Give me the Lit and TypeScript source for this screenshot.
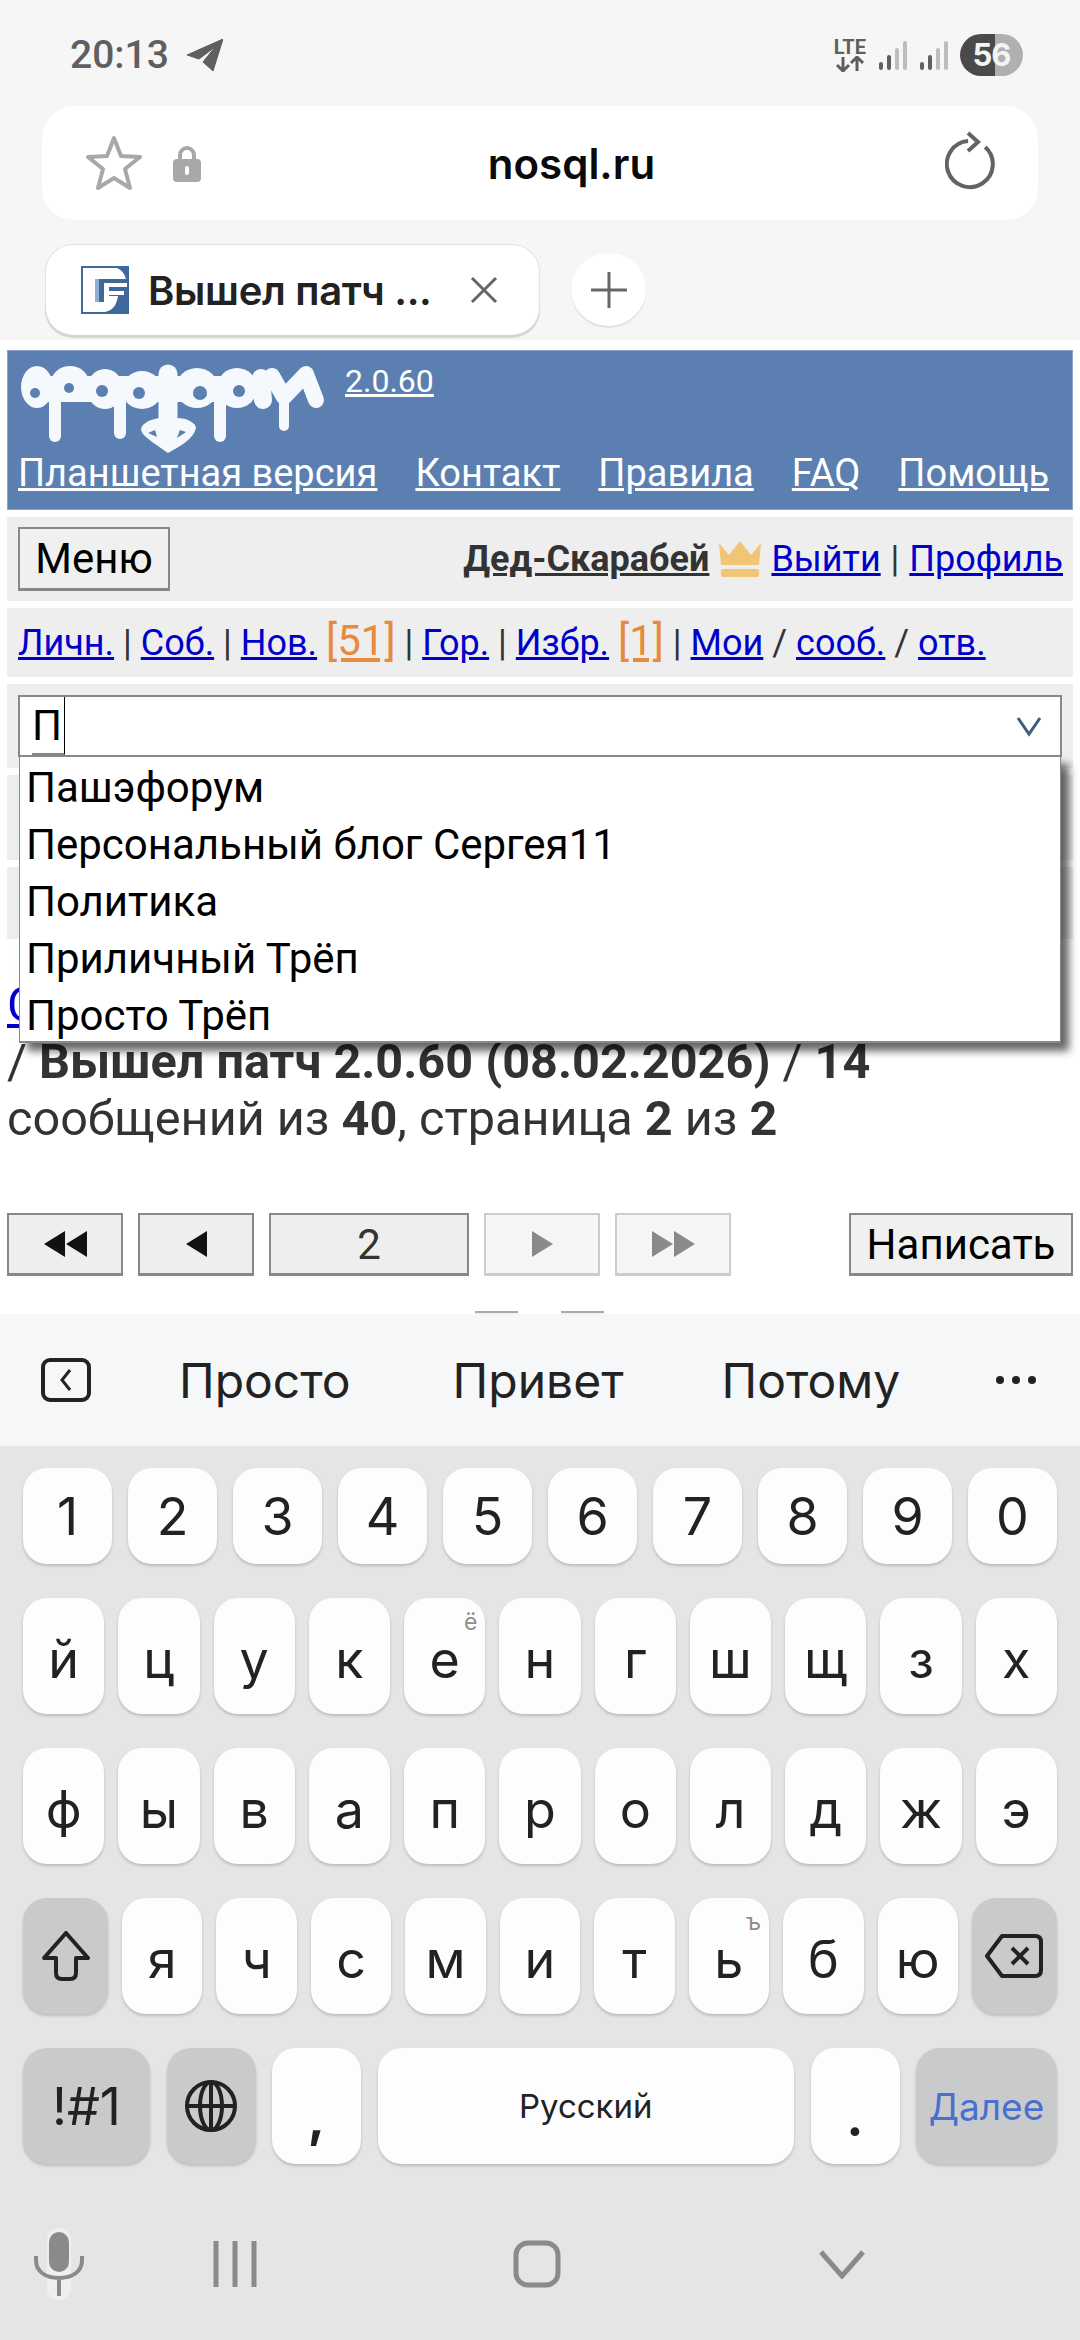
import { LitElement, html, css, svg } from 'lit';
import { customElement } from 'lit/decorators.js';

const ROW_NUM = ['1', '2', '3', '4', '5', '6', '7', '8', '9', '0'];
const ROW_TOP = ['й', 'ц', 'у', 'к', 'е', 'н', 'г', 'ш', 'щ', 'з', 'х'];
const ROW_MID = ['ф', 'ы', 'в', 'а', 'п', 'р', 'о', 'л', 'д', 'ж', 'э'];
const ROW_LOW = ['я', 'ч', 'с', 'м', 'и', 'т', 'ь', 'б', 'ю'];
const HINTS: Record<string, string> = { е: 'ё', ь: 'ъ' };
const OPTIONS = ['Пашэфорум', 'Персональный блог Сергея11', 'Политика', 'Приличный Трёп', 'Просто Трёп'];

const bars = () => svg`
  <rect x="0" y="21" width="4" height="8" rx="2" fill="#5f5f5f"></rect>
  <rect x="8" y="14" width="4" height="15" rx="2" fill="#5f5f5f"></rect>
  <rect x="16" y="7" width="4" height="22" rx="2" fill="#bdbdbd"></rect>
  <rect x="24" y="0" width="4" height="29" rx="2" fill="#bdbdbd"></rect>
`;

const blob = (cx: number, cy: number, rx: number, ry: number) => svg`
  <ellipse cx=${cx} cy=${cy} rx=${rx} ry=${ry} fill="#f5f9fd"></ellipse>
`;
const hole = (cx: number, cy: number, r: number) => svg`
  <circle cx=${cx} cy=${cy} r=${r} fill="#5b7fb0"></circle>
`;

@customElement('app-root')
export class AppRoot extends LitElement {
  static styles = css`
    :host {
      display: block;
      width: 1080px;
      height: 2340px;
      overflow: hidden;
      font-family: Roboto, sans-serif;
      background: #fff;
    }
    * {
      box-sizing: border-box;
    }
    svg {
      display: block;
      flex: none;
    }

    .chrome {
      height: 340px;
      background: #f6f6f6;
      padding: 0 42px;
    }
    .status {
      height: 106px;
      display: flex;
      align-items: center;
      padding: 4px 15px 0 28px;
      color: #5f5f5f;
    }
    .time {
      font: 500 39px Roboto, sans-serif;
      margin-right: 18px;
    }
    .status-right {
      margin-left: auto;
      display: flex;
      align-items: center;
      gap: 13px;
    }
    .lte {
      font: 700 20px/18px Roboto, sans-serif;
      text-align: center;
    }
    .battery {
      width: 63px;
      height: 42px;
      border-radius: 21px;
      margin-left: -1px;
      background: linear-gradient(90deg, #4a4a4a 0 35px, #b0b0b0 35px);
      color: #f4f4f4;
      font: 700 31px/42px Inter, sans-serif;
      text-align: center;
      letter-spacing: -1px;
    }
    .url {
      height: 114px;
      border-radius: 32px;
      background: #fff;
      display: flex;
      align-items: center;
      padding: 0 41px 0 43px;
    }
    .url .host {
      flex: 1;
      text-align: center;
      font: 600 42px Inter, sans-serif;
      color: #0a0a0a;
      padding-right: 3px;
    }
    .lock {
      margin-left: 30px;
    }
    .reload {
      margin-top: -4px;
    }
    .tabs {
      display: flex;
      align-items: flex-start;
      margin-top: 24px;
      padding-left: 3px;
    }
    .tab {
      width: 495px;
      height: 91px;
      border-radius: 28px;
      background: #fff;
      border: 1px solid #e2e2e2;
      border-bottom: none;
      box-shadow: 0 3px 1px #d4d4d4;
      display: flex;
      align-items: center;
      padding: 0 41px 0 35px;
      margin-right: 31px;
    }
    .tab-title {
      font: 600 40px Inter, sans-serif;
      color: #222;
      margin-left: 19px;
      flex: 1;
      white-space: nowrap;
      letter-spacing: -0.3px;
    }
    .plus {
      width: 75px;
      height: 73px;
      margin-top: 9px;
      border-radius: 50%;
      background: #fff;
      box-shadow: 0 2px 1px #e0e0e0;
      display: flex;
      align-items: center;
      justify-content: center;
    }

    .page {
      height: 974px;
      overflow: hidden;
      padding: 10px 7px 0;
      background: #fff;
      font-size: 38px;
      color: #333;
    }
    a {
      color: #0000cc;
      text-decoration: underline;
    }
    .head {
      height: 160px;
      background: #5b7fb0;
      border: 1px solid #8aa3c6;
      padding: 0 10px;
    }
    .head a {
      color: #fff;
    }
    .head-top {
      height: 98px;
      display: flex;
      align-items: flex-start;
    }
    .logo {
      margin-left: -10px;
    }
    .ver {
      font-size: 32px;
      margin: 11px 0 0 7px;
    }
    .head-links {
      display: flex;
      gap: 38px;
      font-size: 38px;
      line-height: 48px;
      white-space: nowrap;
    }
    .gray {
      background: #eee;
      margin-top: 7px;
      padding: 0 11px;
      display: flex;
      align-items: center;
    }
    .user {
      height: 84px;
      justify-content: space-between;
    }
    .menu-btn {
      width: 152px;
      height: 64px;
      border: 2px solid #888;
      border-bottom-width: 3px;
      background: #f0f0f0;
      color: #000;
      font-size: 42px;
      line-height: 60px;
      text-align: center;
    }
    .who {
      display: flex;
      align-items: center;
      gap: 9px;
      font-size: 36px;
      white-space: pre;
      margin-right: -1px;
    }
    .who b {
      color: #333;
      text-decoration: underline;
    }
    .sep {
      color: #333;
    }
    .who .sep {
      margin: 0 1px;
    }
    .nav-links {
      height: 69px;
      font-size: 36px;
      white-space: pre;
    }
    .orange {
      color: #e88a3c;
      font-size: 42px;
      line-height: 36px;
    }
    .select-row {
      height: 84px;
      padding-top: 4px;
      align-items: flex-start;
    }
    .select {
      position: relative;
      width: 100%;
      margin-top: 7px;
    }
    .field {
      height: 62px;
      border: 2px solid #888;
      background: #fff;
      display: flex;
      align-items: center;
      justify-content: space-between;
      padding: 0 18px 0 0;
    }
    .typed {
      height: 58px;
      margin-left: 12px;
      padding-right: 2px;
      border-right: 1px solid #000;
      border-bottom: 2px solid #888;
      font-size: 42px;
      line-height: 58px;
      color: #000;
    }
    .options {
      position: absolute;
      z-index: 2;
      top: 61px;
      left: 1px;
      right: 1px;
      height: 287px;
      background: #fff;
      border: 1px solid #888;
      border-bottom-width: 2px;
      box-shadow: 8px 8px 8px rgba(0, 0, 0, 0.6);
      padding: 2px 6px 0;
    }
    .option {
      height: 57px;
      line-height: 57px;
      font-size: 42px;
      color: #000;
      white-space: nowrap;
    }
    .block-a {
      height: 85px;
    }
    .block-b {
      height: 72px;
    }
    .thread {
      margin-top: 37px;
      font-size: 48.6px;
      line-height: 57px;
      color: #333;
    }
    .pager {
      display: flex;
      margin-top: 66px;
      gap: 15px;
    }
    .pbtn {
      width: 116px;
      height: 63px;
      border: 2px solid #888;
      border-bottom-width: 3px;
      background: #eee;
      display: flex;
      align-items: center;
      justify-content: center;
      font-size: 42px;
      color: #333;
    }
    .pbtn.off {
      border-color: #ccc;
      background: #f6f6f6;
    }
    .pbtn.num {
      width: 200px;
    }
    .pbtn.write {
      width: 224px;
      margin-left: auto;
      color: #000;
      background: #f0f0f0;
    }
    .stubs {
      display: flex;
      gap: 43px;
      margin: 35px 0 0 468px;
    }
    .stubs i {
      width: 43px;
      height: 6px;
      border-top: 2px solid #aaa;
      background: #f0f0f0;
    }

    .strip {
      height: 132px;
      background: #f6f7f8;
      display: flex;
      align-items: center;
      padding: 0 0 0 41px;
      color: #222;
      font: 400 48px Inter, sans-serif;
    }
    .word {
      white-space: nowrap;
    }
    .w1 {
      margin-left: 88px;
    }
    .w2 {
      margin-left: 102px;
    }
    .w3 {
      margin-left: 98px;
    }
    .more {
      margin-left: 95px;
    }
    .keyboard {
      height: 894px;
      background: #e4e5e7;
      padding: 22px 23px 0;
      display: flex;
      flex-direction: column;
      gap: 34px;
    }
    .krow {
      display: flex;
      gap: 14px;
      height: 116px;
    }
    .krow.nums {
      gap: 16px;
      height: 96px;
    }
    .krow.last {
      gap: 16.5px;
    }
    .key {
      position: relative;
      flex: 1 1 0;
      min-width: 0;
      border-radius: 24px;
      background: #fdfdfe;
      box-shadow: 0 2px 3px rgba(0, 0, 0, 0.18);
      display: flex;
      align-items: center;
      justify-content: center;
      color: #222;
      font: 400 52px Inter, sans-serif;
      padding-top: 6px;
    }
    .nums .key {
      padding-top: 0;
    }
    .key.fn {
      background: #c9cacc;
      padding-top: 0;
    }
    .key sup {
      position: absolute;
      top: 12px;
      right: 8px;
      font: 400 23px Inter, sans-serif;
      line-height: 24px;
      color: #8e8e8e;
    }
    .w85 {
      flex: 0 0 85px;
    }
    .sym {
      flex: 0 0 127px;
    }
    .globe {
      flex: 0 0 89px;
    }
    .punct {
      flex: 0 0 89px;
      font-weight: 700;
      padding: 22px 0 0;
    }
    .space {
      flex: 1 1 auto;
      font-size: 33px;
      padding-top: 0;
    }
    .go {
      flex: 0 0 141px;
      color: #4a6fcf;
      font-size: 37px;
    }
    .bottom {
      display: flex;
      align-items: center;
      margin-top: 30px;
      padding-left: 8px;
    }
    .nav-recents {
      margin-left: 126px;
    }
    .nav-home {
      margin-left: 256px;
    }
    .nav-back {
      margin-left: 257px;
    }
  `;

  private logo() {
    return html`<svg class="logo" width="330" height="105" viewBox="8 351 330 105">
      <g stroke="#f5f9fd" stroke-linecap="round" stroke-linejoin="round" fill="none">
        <path d="M55 400V436" stroke-width="12"></path>
        <path d="M120 400V433" stroke-width="12"></path>
        <path d="M220 400V436" stroke-width="12"></path>
        <path d="M284 395V426" stroke-width="10"></path>
        <path d="M168 374V420" stroke-width="19"></path>
        <path d="M261 378L263 400" stroke-width="18"></path>
        <path d="M272 376L284 397L306 374L316 400" stroke-width="16"></path>
      </g>
      <rect x="40" y="376" width="212" height="26" fill="#f5f9fd"></rect>
      ${blob(37, 387, 16, 21)} ${blob(70, 383, 19, 17)} ${blob(105, 389, 18, 20)}
      ${blob(142, 390, 20, 19)} ${blob(197, 388, 21, 20)} ${blob(237, 388, 20, 20)}
      <path
        d="M159 418C147 420 141 425 141 430C142 436 154 443 168 453C181 446 194 438 196 428C196 423 187 418 177 418Z"
        fill="#f5f9fd"
      ></path>
      ${hole(35, 393, 5)} ${hole(69, 388, 5)} ${hole(102, 391, 6)} ${hole(139, 393, 6)}
      ${hole(200, 393, 7)} ${hole(239, 391, 6)}
      <path d="M148 433L157 437L155 430ZM186 432L177 438L180 430Z" fill="#5b7fb0"></path>
    </svg>`;
  }

  private chrome() {
    return html`<div class="chrome">
      <div class="status">
        <span class="time">20:13</span>
        <svg width="36" height="32" viewBox="0 0 36 32">
          <path d="M36 0L0 16L12 20L28 8L16 23L26 32Z" fill="#5f5f5f" stroke="#5f5f5f" stroke-linejoin="round"></path>
        </svg>
        <div class="status-right">
          <div class="lte">
            LTE
            <svg width="32" height="16" viewBox="0 0 32 16">
              <path d="M9 1V14M3 9L9 15L15 9M23 15V2M17 7L23 1L29 7" stroke="#5f5f5f" stroke-width="3" fill="none"></path>
            </svg>
          </div>
          <svg width="28" height="29" viewBox="0 0 28 29">${bars()}</svg>
          <svg width="28" height="29" viewBox="0 0 28 29">${bars()}</svg>
          <div class="battery">56</div>
        </div>
      </div>
      <div class="url">
        <svg width="58" height="56" viewBox="0 0 58 56">
          <path
            d="M29 3L36 21L55 22L40 34L45 53L29 43L13 53L18 34L3 22L22 21Z"
            fill="none"
            stroke="#a8a8a8"
            stroke-width="4"
            stroke-linejoin="round"
          ></path>
        </svg>
        <svg class="lock" width="28" height="37" viewBox="0 0 28 37">
          <path d="M7 16V10a7 7 0 0 1 14 0v6" fill="none" stroke="#a8a8a8" stroke-width="4"></path>
          <rect y="14" width="28" height="23" rx="4" fill="#a8a8a8"></rect>
          <rect x="12" y="21" width="4" height="9" rx="2" fill="#fff"></rect>
        </svg>
        <span class="host">nosql.ru</span>
        <svg class="reload" width="52" height="60" viewBox="0 0 52 60">
          <path
            d="M32 12A23 23 0 1 1 14 13"
            transform="rotate(22 26 35)"
            fill="none"
            stroke="#636363"
            stroke-width="4"
          ></path>
          <path d="M23 2L33 11L23 20" fill="none" stroke="#636363" stroke-width="4"></path>
        </svg>
      </div>
      <div class="tabs">
        <div class="tab">
          <svg width="48" height="48" viewBox="0 0 48 48">
            <rect width="48" height="48" fill="#40699b"></rect>
            <path d="M2 2H36Q43 5 45 13H14V36H23V30H37Q35 44 24 46H2Z" fill="#fff"></path>
            <path d="M14 13H18V36H14Z" fill="#8fb0d0"></path>
            <path d="M23 17H46V21H28V25H43V29H28V36H23Z" fill="#fff"></path>
          </svg>
          <span class="tab-title">Вышел патч ...</span>
          <svg width="28" height="28" viewBox="0 0 28 28">
            <path d="M2 2L26 26M26 2L2 26" stroke="#666" stroke-width="3"></path>
          </svg>
        </div>
        <div class="plus">
          <svg width="38" height="38" viewBox="0 0 38 38">
            <path d="M19 1V37M1 19H37" stroke="#666" stroke-width="3"></path>
          </svg>
        </div>
      </div>
    </div>`;
  }

  private tri(dir: 'l' | 'r', color: string, n: number) {
    const path = dir === 'l' ? 'M21 0V26L0 13Z' : 'M0 0V26L21 13Z';
    const w = n * 21 + (n > 1 ? 1 : 0);
    return html`<svg width=${w} height="26" viewBox="0 0 ${w} 26">
      ${Array.from({ length: n }, (_, i) => svg`<path d=${path} transform="translate(${i * 22} 0)" fill=${color}></path>`)}
    </svg>`;
  }

  private page() {
    return html`<div class="page">
      <div class="head">
        <div class="head-top">
          ${this.logo()}
          <a class="ver" href="#">2.0.60</a>
        </div>
        <div class="head-links">
          <a href="#">Планшетная версия</a><a href="#">Контакт</a><a href="#">Правила</a><a href="#">FAQ</a
          ><a href="#">Помощь</a>
        </div>
      </div>
      <div class="gray user">
        <div class="menu-btn">Меню</div>
        <div class="who">
          <b>Дед-Скарабей</b>
          <svg width="44" height="36" viewBox="0 0 44 36">
            <path d="M1 2L11 14L22 0L33 14L43 2L41 24H3Z" fill="#f0c674"></path>
            <rect x="3" y="28" width="38" height="8" rx="2" fill="#f0c674"></rect>
          </svg>
          <span><a href="#">Выйти</a><span class="sep"> | </span><a href="#">Профиль</a></span>
        </div>
      </div>
      <div class="gray nav-links">
        <span
          ><a href="#">Личн.</a><span class="sep"> | </span><a href="#">Соб.</a><span class="sep"> | </span
          ><a href="#">Нов.</a> <a class="orange" href="#">[51]</a><span class="sep"> | </span><a href="#">Гор.</a
          ><span class="sep"> | </span><a href="#">Избр.</a> <a class="orange" href="#">[1]</a
          ><span class="sep"> | </span><a href="#">Мои</a><span class="sep"> / </span><a href="#">сооб.</a
          ><span class="sep"> / </span><a href="#">отв.</a></span
        >
      </div>
      <div class="gray select-row">
        <div class="select">
          <div class="field">
            <span class="typed">П</span>
            <svg width="26" height="22" viewBox="0 0 26 22">
              <path d="M2 3L13 19L24 3" fill="none" stroke="#3f5f80" stroke-width="3"></path>
            </svg>
          </div>
          <div class="options">${OPTIONS.map(o => html`<div class="option">${o}</div>`)}</div>
        </div>
      </div>
      <div class="gray block-a"></div>
      <div class="gray block-b"></div>
      <div class="thread">
        <a href="#">Список</a><br />
        / <b>Вышел патч 2.0.60 (08.02.2026)</b> / <b>14</b><br />
        сообщений из <b>40</b>, страница <b>2</b> из <b>2</b>
      </div>
      <div class="pager">
        <div class="pbtn">${this.tri('l', '#111', 2)}</div>
        <div class="pbtn">${this.tri('l', '#111', 1)}</div>
        <div class="pbtn num">2</div>
        <div class="pbtn off">${this.tri('r', '#8a8a8a', 1)}</div>
        <div class="pbtn off">${this.tri('r', '#8a8a8a', 2)}</div>
        <div class="pbtn write">Написать</div>
      </div>
      <div class="stubs"><i></i><i></i></div>
    </div>`;
  }

  private key(label: string) {
    const hint = HINTS[label];
    return html`<div class="key">${label}${hint ? html`<sup>${hint}</sup>` : ''}</div>`;
  }

  private keyboard() {
    return html`<div class="strip">
        <svg width="50" height="44" viewBox="0 0 50 44">
          <rect x="2" y="2" width="46" height="40" rx="7" fill="none" stroke="#222" stroke-width="4"></rect>
          <path d="M29 12L21 22L29 32" fill="none" stroke="#222" stroke-width="3"></path>
        </svg>
        <span class="word w1">Просто</span>
        <span class="word w2">Привет</span>
        <span class="word w3">Потому</span>
        <svg class="more" width="42" height="10" viewBox="0 0 42 10">
          <circle cx="5" cy="5" r="4" fill="#222"></circle>
          <circle cx="21" cy="5" r="4" fill="#222"></circle>
          <circle cx="37" cy="5" r="4" fill="#222"></circle>
        </svg>
      </div>
      <div class="keyboard">
        <div class="krow nums">${ROW_NUM.map(k => this.key(k))}</div>
        <div class="krow">${ROW_TOP.map(k => this.key(k))}</div>
        <div class="krow">${ROW_MID.map(k => this.key(k))}</div>
        <div class="krow">
          <div class="key fn w85">
            <svg width="48" height="50" viewBox="0 0 48 50">
              <path
                d="M24 2L46 27H34V42Q34 48 28 48H20Q14 48 14 42V27H2Z"
                fill="none"
                stroke="#222"
                stroke-width="4"
                stroke-linejoin="round"
              ></path>
            </svg>
          </div>
          ${ROW_LOW.map(k => this.key(k))}
          <div class="key fn w85">
            <svg width="58" height="44" viewBox="0 0 58 44">
              <path
                d="M17 2H50Q56 2 56 8V36Q56 42 50 42H17L2 22Z"
                fill="none"
                stroke="#222"
                stroke-width="4"
                stroke-linejoin="round"
              ></path>
              <path d="M27 14L43 30M43 14L27 30" stroke="#222" stroke-width="4"></path>
            </svg>
          </div>
        </div>
        <div class="krow last">
          <div class="key fn sym">!#1</div>
          <div class="key fn globe">
            <svg width="54" height="54" viewBox="0 0 54 54">
              <g fill="none" stroke="#222" stroke-width="4">
                <circle cx="27" cy="27" r="24"></circle>
                <ellipse cx="27" cy="27" rx="11" ry="24"></ellipse>
                <path d="M27 3V51M3 27H51"></path>
              </g>
            </svg>
          </div>
          <div class="key punct">,</div>
          <div class="key space">Русский</div>
          <div class="key punct">.</div>
          <div class="key fn go">Далее</div>
        </div>
        <div class="bottom">
          <svg width="56" height="72" viewBox="0 0 56 72">
            <rect x="16" y="0" width="24" height="72" rx="12" fill="#efeff0"></rect>
            <rect x="18" y="4" width="20" height="40" rx="10" fill="#8a8a8a"></rect>
            <path d="M5 28V32C5 44 15 50 28 50C41 50 51 44 51 32V28M28 50V68" fill="none" stroke="#8a8a8a" stroke-width="4"></path>
          </svg>
          <svg class="nav-recents" width="44" height="46" viewBox="0 0 44 46">
            <path d="M3 0V46M22 0V46M41 0V46" stroke="#8a8a8a" stroke-width="5"></path>
          </svg>
          <svg class="nav-home" width="48" height="48" viewBox="0 0 48 48">
            <rect x="3" y="3" width="42" height="42" rx="12" fill="none" stroke="#8a8a8a" stroke-width="5"></rect>
          </svg>
          <svg class="nav-back" width="48" height="30" viewBox="0 0 48 30">
            <path d="M3 3L24 27L45 3" fill="none" stroke="#8a8a8a" stroke-width="5"></path>
          </svg>
        </div>
      </div>`;
  }

  render() {
    return html`${this.chrome()}${this.page()}${this.keyboard()}`;
  }
}
